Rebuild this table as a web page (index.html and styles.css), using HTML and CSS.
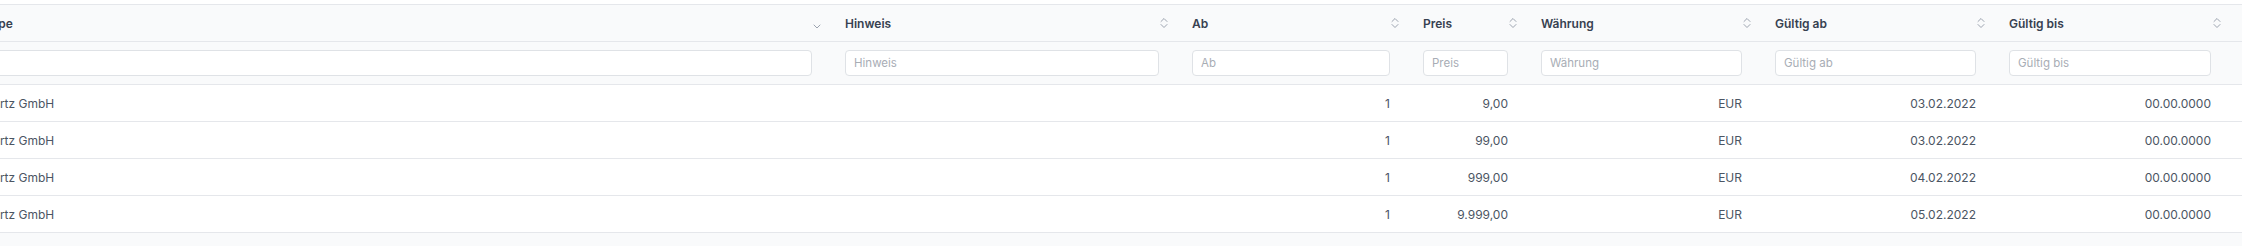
FILE: index.html
```html
<!DOCTYPE html>
<html lang="de">
<head>
<meta charset="utf-8">
<title>Preise</title>
<link rel="stylesheet" href="styles.css">
</head>
<body>
<div class="page">
  <div class="scroller">
    <table class="grid">
      <colgroup>
        <col class="c-name">
        <col class="c-hinweis">
        <col class="c-ab">
        <col class="c-preis">
        <col class="c-waehrung">
        <col class="c-von">
        <col class="c-bis">
      </colgroup>
      <thead>
        <tr class="head">
          <th><div class="th-in"><span>Type</span>
            <svg class="chev" width="8" height="5" viewBox="0 0 8 5"><path d="M1 1 L4 4 L7 1" fill="none" stroke="#9ca3af" stroke-width="1" stroke-linecap="round" stroke-linejoin="round"/></svg></div></th>
          <th><div class="th-in"><span>Hinweis</span>
            <svg class="sort" width="8" height="12" viewBox="0 0 8 12"><path d="M1 4.5 L4 1.5 L7 4.5 M1 7.5 L4 10.5 L7 7.5" fill="none" stroke="#9ca3af" stroke-width="1" stroke-linecap="round" stroke-linejoin="round"/></svg></div></th>
          <th><div class="th-in"><span>Ab</span>
            <svg class="sort" width="8" height="12" viewBox="0 0 8 12"><path d="M1 4.5 L4 1.5 L7 4.5 M1 7.5 L4 10.5 L7 7.5" fill="none" stroke="#9ca3af" stroke-width="1" stroke-linecap="round" stroke-linejoin="round"/></svg></div></th>
          <th><div class="th-in"><span>Preis</span>
            <svg class="sort" width="8" height="12" viewBox="0 0 8 12"><path d="M1 4.5 L4 1.5 L7 4.5 M1 7.5 L4 10.5 L7 7.5" fill="none" stroke="#9ca3af" stroke-width="1" stroke-linecap="round" stroke-linejoin="round"/></svg></div></th>
          <th><div class="th-in"><span>Währung</span>
            <svg class="sort" width="8" height="12" viewBox="0 0 8 12"><path d="M1 4.5 L4 1.5 L7 4.5 M1 7.5 L4 10.5 L7 7.5" fill="none" stroke="#9ca3af" stroke-width="1" stroke-linecap="round" stroke-linejoin="round"/></svg></div></th>
          <th><div class="th-in"><span>Gültig ab</span>
            <svg class="sort" width="8" height="12" viewBox="0 0 8 12"><path d="M1 4.5 L4 1.5 L7 4.5 M1 7.5 L4 10.5 L7 7.5" fill="none" stroke="#9ca3af" stroke-width="1" stroke-linecap="round" stroke-linejoin="round"/></svg></div></th>
          <th><div class="th-in"><span>Gültig bis</span>
            <svg class="sort" width="8" height="12" viewBox="0 0 8 12"><path d="M1 4.5 L4 1.5 L7 4.5 M1 7.5 L4 10.5 L7 7.5" fill="none" stroke="#9ca3af" stroke-width="1" stroke-linecap="round" stroke-linejoin="round"/></svg></div></th>
        </tr>
        <tr class="filter">
          <td><input class="fi" type="text" placeholder=""></td>
          <td><input class="fi" type="text" placeholder="Hinweis"></td>
          <td><input class="fi" type="text" placeholder="Ab"></td>
          <td><input class="fi" type="text" placeholder="Preis"></td>
          <td><input class="fi" type="text" placeholder="Währung"></td>
          <td><input class="fi" type="text" placeholder="Gültig ab"></td>
          <td><input class="fi" type="text" placeholder="Gültig bis"></td>
        </tr>
      </thead>
      <tbody>
        <tr>
          <td>Hertz GmbH</td><td></td><td class="num">1</td><td class="num">9,00</td><td class="num">EUR</td><td class="num">03.02.2022</td><td class="num">00.00.0000</td>
        </tr>
        <tr>
          <td>Hertz GmbH</td><td></td><td class="num">1</td><td class="num">99,00</td><td class="num">EUR</td><td class="num">03.02.2022</td><td class="num">00.00.0000</td>
        </tr>
        <tr>
          <td>Hertz GmbH</td><td></td><td class="num">1</td><td class="num">999,00</td><td class="num">EUR</td><td class="num">04.02.2022</td><td class="num">00.00.0000</td>
        </tr>
        <tr>
          <td>Hertz GmbH</td><td></td><td class="num">1</td><td class="num">9.999,00</td><td class="num">EUR</td><td class="num">05.02.2022</td><td class="num">00.00.0000</td>
        </tr>
      </tbody>
    </table>
  </div>
  <div class="footer"></div>
</div>
</body>
</html>
```
FILE: styles.css
```css
* { box-sizing: border-box; }
html, body {
  margin: 0;
  padding: 0;
  background: #ffffff;
  font-family: Inter, "Noto Sans", sans-serif;
  font-size: 12px;
}
.page {
  width: 2242px;
  height: 246px;
  padding-top: 4px;
  display: flex;
  flex-direction: column;
  overflow: hidden;
}
.scroller {
  overflow: hidden;
  border-top: 1px solid #e5e7eb;
}
.grid {
  border-collapse: separate;
  border-spacing: 0;
  table-layout: fixed;
  width: 2270px;
  margin-left: -28px;
}
.c-name { width: 861px; }
.c-hinweis { width: 347px; }
.c-ab { width: 231px; }
.c-preis { width: 118px; }
.c-waehrung { width: 234px; }
.c-von { width: 234px; }
.c-bis { width: 245px; }

.head th {
  background: #f9fafb;
  height: 37px;
  padding: 0 12px;
  border-bottom: 1px solid #e5e7eb;
  text-align: left;
  font-weight: 600;
  color: #374151;
  font-size: 12px;
}
.head th:last-child { padding-right: 21px; }
.th-in {
  display: flex;
  align-items: center;
  justify-content: space-between;
}
.chev { margin-top: 6px; }
.sort { display: block; }

.filter td {
  background: #f9fafb;
  height: 43px;
  padding: 8px 21px 8px 12px;
  border-bottom: 1px solid #e5e7eb;
}
.filter td:last-child { padding-right: 31px; }
.fi {
  display: block;
  width: 100%;
  height: 26px;
  border: 1px solid #dfe2e6;
  border-radius: 4px;
  background: #ffffff;
  padding: 0 8px;
  font-family: Inter, "Noto Sans", sans-serif;
  font-size: 11.5px;
  color: #4b5563;
}
.fi::placeholder { color: #a8adb5; }

tbody td {
  height: 37px;
  padding: 0 21px 0 12px;
  border-bottom: 1px solid #e5e7eb;
  color: #4b5563;
  font-size: 12px;
  white-space: nowrap;
}
tbody td:last-child { padding-right: 31px; }
tbody td.num { text-align: right; }

.footer {
  flex: 1;
  background: #f9fafb;
}
```
